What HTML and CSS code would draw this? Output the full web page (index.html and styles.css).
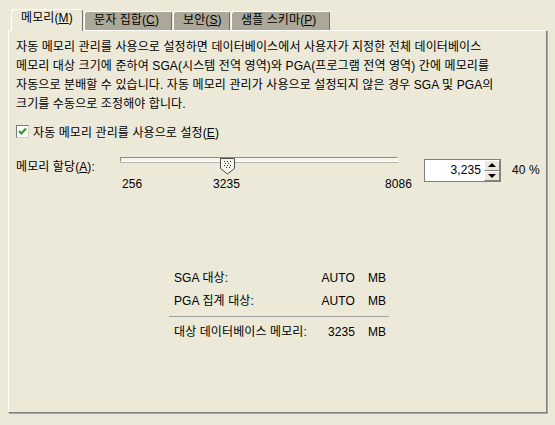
FILE: index.html
```html
<!DOCTYPE html>
<html>
<head>
	<title>메모리 설정</title>
	<link rel="stylesheet" href="styles.css">
</head>
<body>
	<!-- Tab strip -->
	<div class="tabs">
		<div class="tab active tab-memory">메모리(<u>M</u>)</div>
		<div class="tab tab-charset">문자 집합(<u>C</u>)</div>
		<div class="tab tab-security">보안(<u>S</u>)</div>
		<div class="tab tab-schema">샘플 스키마(<u>P</u>)</div>
	</div>

	<div class="panel">
		<p class="intro">
			자동 메모리 관리를 사용으로 설정하면 데이터베이스에서 사용자가 지정한 전체 데이터베이스<br>
			메모리 대상 크기에 준하여 SGA(시스템 전역 영역)와 PGA(프로그램 전역 영역) 간에 메모리를<br>
			자동으로 분배할 수 있습니다. 자동 메모리 관리가 사용으로 설정되지 않은 경우 SGA 및 PGA의<br>
			크기를 수동으로 조정해야 합니다.
		</p>

		<label class="check-row">
			<span class="check-box">
				<svg width="11" height="11" viewBox="0 0 11 11"><path d="M2 5 L4.5 7.5 L9 2.5" fill="none" stroke="#21a121" stroke-width="2.2"/></svg>
			</span>
			<span>자동 메모리 관리를 사용으로 설정(<u>E</u>)</span>
		</label>

		<div class="alloc-row">
			<div class="alloc-label">메모리 할당(<u>A</u>):</div>
			<div class="slider">
				<div class="slider-area">
					<div class="track"></div>
					<svg class="thumb" style="left: 100px" width="15" height="17" viewBox="0 0 15 17">
						<path d="M0.5 0.5 H14.5 V10.5 L7.5 16 L0.5 10.5 Z" fill="#f4f3ee" stroke="#4a4a4a"/>
						<g fill="#333">
							<rect x="4" y="3" width="1" height="1"/><rect x="7" y="3" width="1" height="1"/><rect x="10" y="3" width="1" height="1"/>
							<rect x="5" y="5" width="1" height="1"/><rect x="8" y="5" width="1" height="1"/>
							<rect x="4" y="7" width="1" height="1"/><rect x="7" y="7" width="1" height="1"/><rect x="10" y="7" width="1" height="1"/>
							<rect x="6" y="9" width="1" height="1"/><rect x="9" y="9" width="1" height="1"/>
						</g>
					</svg>
				</div>
				<div class="ticks">
					<span>256</span>
					<span class="tick-current" style="left: 93px">3235</span>
					<span>8086</span>
				</div>
			</div>
			<div class="spin">
				<div class="spin-value">3,235</div>
				<div class="spin-buttons">
					<div class="spin-btn"><span class="arrow-up"></span></div>
					<div class="spin-btn"><span class="arrow-down"></span></div>
				</div>
			</div>
			<div class="pct">40 %</div>
		</div>

		<div class="summary">
			<div class="sum-row">
				<span class="sum-label">SGA 대상:</span>
				<span class="sum-value">AUTO</span>
				<span class="sum-unit">MB</span>
			</div>
			<div class="sum-row">
				<span class="sum-label">PGA 집계 대상:</span>
				<span class="sum-value">AUTO</span>
				<span class="sum-unit">MB</span>
			</div>
			<div class="sum-sep"></div>
			<div class="sum-row">
				<span class="sum-label">대상 데이터베이스 메모리:</span>
				<span class="sum-value">3235</span>
				<span class="sum-unit">MB</span>
			</div>
		</div>
	</div>
</body>
</html>
```

FILE: styles.css
```css
/* Page */
body {
	margin: 0;
	width: 555px;
	height: 425px;
	background-color: #ece9d8;
	font: 12px "Liberation Sans", "Noto Sans CJK KR", sans-serif;
	letter-spacing: 0.1px;
	color: #000;
	overflow: hidden;
}
u {
	text-decoration: underline;
}

/* Tab strip */
.tabs {
	display: flex;
	align-items: flex-end;
	height: 30px;
	padding-left: 11px;
	box-sizing: border-box;
}
.tab {
	box-sizing: border-box;
	height: 19px;
	line-height: 17px;
	padding-left: 9px;
	margin-right: 1px;
	background-color: #aca899;
	border-top: 1px solid #fff;
	border-left: 1px solid #fff;
	border-right: 1px solid #716f64;
	border-radius: 3px 3px 0 0;
	white-space: nowrap;
}
.tab.active {
	position: relative;
	z-index: 1;
	height: 22px;
	line-height: 16px;
	margin-bottom: -1px;
	background-color: #ece9d8;
}
.tab-memory { width: 72px; }
.tab-charset { width: 88px; }
.tab-security { width: 57px; }
.tab-schema { width: 99px; }

/* Panel */
.panel {
	box-sizing: border-box;
	margin-left: 8px;
	width: 539px;
	height: 383px;
	padding: 7px 0 0 7px;
	border-top: 1px solid #fff;
	border-left: 1px solid #fff;
	border-right: 1px solid #808080;
	border-bottom: 1px solid #808080;
	box-shadow: 1px 1px 0 #a9a797;
}
.intro {
	margin: 0;
	line-height: 19px;
	white-space: nowrap;
}

/* Checkbox */
.check-row {
	display: flex;
	align-items: center;
	height: 19px;
	margin-top: 8px;
	gap: 4px;
}
.check-box {
	display: flex;
	align-items: center;
	justify-content: center;
	box-sizing: border-box;
	width: 13px;
	height: 13px;
	background-color: #fff;
	border: 1px solid #7a7a7a;
	border-right-color: #d4d0c8;
	border-bottom-color: #d4d0c8;
}

/* Memory allocation row */
.alloc-row {
	display: flex;
	align-items: flex-start;
	margin-top: 9px;
}
.alloc-label {
	width: 104px;
	padding-top: 8px;
	line-height: 19px;
}
.slider {
	width: 292px;
}
.slider-area {
	position: relative;
	height: 18px;
}
.track {
	box-sizing: border-box;
	width: 278px;
	height: 5px;
	margin-top: 7px;
	background-color: #f4f3ee;
	border-top: 1px solid #8d8b80;
	border-left: 1px solid #8d8b80;
	border-bottom: 1px solid #fff;
	border-right: 1px solid #fff;
	box-shadow: 0 1px 0 #b5b3a6;
}
.thumb {
	position: absolute;
	top: 1px;
}
.ticks {
	position: relative;
	display: flex;
	justify-content: space-between;
	height: 19px;
	line-height: 19px;
	padding-left: 2px;
}
.tick-current {
	position: absolute;
	top: 0;
}

/* Spin box */
.spin {
	display: flex;
	box-sizing: border-box;
	width: 77px;
	height: 23px;
	margin: 9px 0 0 12px;
	border: 1px solid #7f7f7f;
	background-color: #fff;
}
.spin-value {
	flex: 1;
	text-align: right;
	padding-right: 3px;
	line-height: 21px;
}
.spin-buttons {
	display: flex;
	flex-direction: column;
	width: 16px;
}
.spin-btn {
	flex: 1;
	display: flex;
	align-items: center;
	justify-content: center;
	background-color: #ece9d8;
	border-top: 1px solid #fff;
	border-left: 1px solid #fff;
	border-right: 1px solid #808080;
	border-bottom: 1px solid #808080;
}
.arrow-up {
	width: 0;
	height: 0;
	border-left: 4px solid transparent;
	border-right: 4px solid transparent;
	border-bottom: 4px solid #000;
}
.arrow-down {
	width: 0;
	height: 0;
	border-left: 4px solid transparent;
	border-right: 4px solid transparent;
	border-top: 4px solid #000;
}
.pct {
	margin-left: 11px;
	padding-top: 11px;
	line-height: 19px;
}

/* Summary */
.summary {
	width: 220px;
	margin: 73px 0 0 153px;
}
.sum-row {
	display: flex;
	height: 23px;
	line-height: 23px;
	padding-left: 5px;
}
.sum-label {
	flex: 1;
}
.sum-value {
	text-align: right;
}
.sum-unit {
	width: 21px;
	margin-left: 13px;
}
.sum-sep {
	margin: 3px 0 4px;
	border-top: 1px solid #a0a0a0;
}
```
